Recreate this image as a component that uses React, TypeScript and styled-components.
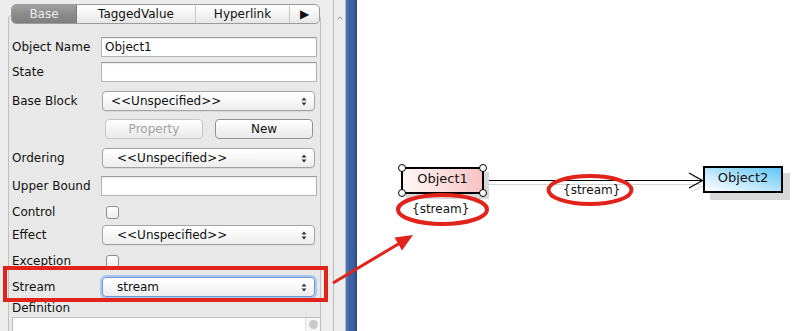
import styled, { createGlobalStyle, css } from "styled-components";

const GlobalStyle = createGlobalStyle`
  html, body {
    margin: 0;
    padding: 0;
    background: #fff;
  }
  body {
    font-family: "DejaVu Sans", "Liberation Sans", sans-serif;
    font-size: 12px;
    color: #111;
  }
  * {
    box-sizing: border-box;
  }
`;

const Window = styled.div`
  position: relative;
  display: flex;
  width: 796px;
  height: 331px;
  overflow: hidden;
`;

const LeftPane = styled.div`
  flex: none;
  width: 334px;
  padding-top: 4px;
  background: #ececec;
  border-right: 1px solid #bcbcbc;
  overflow: hidden;
`;

const TabBar = styled.div`
  position: relative;
  z-index: 1;
  display: flex;
  width: 309px;
  height: 20px;
  margin-left: 11px;
  border: 1px solid #9c9c9c;
  border-radius: 5px;
  overflow: hidden;
  background: linear-gradient(#ffffff, #f1f1f1 60%, #e6e6e6);
`;

const Tab = styled.div<{ $w: number; $active?: boolean; $last?: boolean }>`
  flex: none;
  width: ${(p) => p.$w}px;
  display: flex;
  align-items: center;
  justify-content: center;
  font-size: 12px;
  color: #111;
  border-right: ${(p) => (p.$last ? "none" : "1px solid #c9c9c9")};
  ${(p) =>
    p.$active &&
    css`
      background: linear-gradient(#a0a0a0, #8a8a8a 55%, #7f7f7f);
      color: #ececec;
      border-right-color: #7a7a7a;
    `}
`;

const Panel = styled.div`
  width: 313px;
  height: 330px;
  margin: -10px 0 0 8px;
  background: #e8e8e8;
  border: 1px solid #bfbfbf;
  border-radius: 5px;
  padding-left: 3px;
`;

const Row = styled.div<{ $mt: number; $h?: number }>`
  display: grid;
  grid-template-columns: 89px 1fr;
  align-items: center;
  height: ${(p) => p.$h ?? 20}px;
  margin-top: ${(p) => p.$mt}px;
`;

const Label = styled.span`
  font-size: 12px;
  color: #111;
  white-space: nowrap;
`;

const TextInput = styled.div`
  width: 216px;
  height: 20px;
  padding-left: 3px;
  display: flex;
  align-items: center;
  background: #fff;
  border: 1px solid #b3b3b3;
  border-top-color: #9a9a9a;
  box-shadow: inset 0 1px 1px rgba(0, 0, 0, 0.08);
  font-size: 12px;
`;

const SelectBox = styled.div<{ $pad: number; $focus?: boolean }>`
  position: relative;
  width: 213px;
  height: 20px;
  margin-left: 1px;
  padding-left: ${(p) => p.$pad}px;
  display: flex;
  align-items: center;
  background: linear-gradient(#ffffff, #f7f7f7 50%, #ececec);
  border: 1px solid #a4a4a4;
  border-radius: 4px;
  box-shadow: 0 1px 0 rgba(0, 0, 0, 0.06);
  font-size: 12px;
  ${(p) =>
    p.$focus &&
    css`
      border-color: #6f9ad6;
      box-shadow: 0 0 0 2px #a9c8ef;
    `}
`;

const Arrows = styled.svg`
  position: absolute;
  right: 7px;
  top: 5px;
`;

const ButtonRow = styled.div`
  grid-column: 2;
  display: flex;
  gap: 12px;
  margin-left: 4px;
`;

const Button = styled.div<{ $disabled?: boolean }>`
  width: 98px;
  height: 20px;
  display: flex;
  align-items: center;
  justify-content: center;
  border-radius: 4px;
  font-size: 12px;
  background: linear-gradient(#ffffff, #f4f4f4 50%, #e9e9e9);
  border: 1px solid ${(p) => (p.$disabled ? "#c6c6c6" : "#929292")};
  color: ${(p) => (p.$disabled ? "#a2a2a2" : "#111")};
`;

const Check = styled.div`
  width: 13px;
  height: 13px;
  margin-left: 5px;
  border: 1px solid #8e8e8e;
  border-radius: 3px;
  background: linear-gradient(#ffffff, #ededed);
`;

const TextArea = styled.div`
  position: relative;
  width: 309px;
  height: 30px;
  background: #fff;
  border: 1px solid #bdbdbd;
`;

const AreaScroll = styled.div`
  position: absolute;
  right: 0;
  top: 0;
  width: 15px;
  height: 100%;
  background: #f6f6f6;
  border-left: 1px solid #e0e0e0;
  display: flex;
  justify-content: center;
  padding-top: 2px;
  &::after {
    content: "";
    width: 9px;
    height: 9px;
    border-radius: 50%;
    background: #c9c9c9;
  }
`;

const ScrollStrip = styled.div`
  flex: none;
  width: 12px;
  padding: 9px 0 0 3px;
  background: #ececec;
  border-right: 1px solid #b8b8b8;
`;

const BlueBar = styled.div`
  flex: none;
  width: 11px;
  background: linear-gradient(to right, #5677b3, #3f64a6 30%, #3a5e9f 70%, #27457f);
`;

const Canvas = styled.div`
  position: relative;
  flex: 1;
  background: #fff;
`;

const Wires = styled.svg`
  position: absolute;
  left: 0;
  top: 0;
`;

const Node = styled.div<{ $x: number; $y: number; $w: number; $fill: string; $shadow: number }>`
  position: absolute;
  left: ${(p) => p.$x}px;
  top: ${(p) => p.$y}px;
  width: ${(p) => p.$w}px;
  height: 27px;
  padding-bottom: 4px;
  display: flex;
  align-items: center;
  justify-content: center;
  border: 2px solid #000;
  background: ${(p) => p.$fill};
  box-shadow: ${(p) => p.$shadow}px ${(p) => p.$shadow}px 0 #d8d8d8;
  font-size: 13px;
  color: #111;
`;

const Handle = styled.div<{ $right?: boolean; $bottom?: boolean }>`
  position: absolute;
  width: 8px;
  height: 8px;
  border: 1px solid #000;
  border-radius: 50%;
  background: #fff;
  left: ${(p) => (p.$right ? "auto" : "-5px")};
  right: ${(p) => (p.$right ? "-5px" : "auto")};
  top: ${(p) => (p.$bottom ? "auto" : "-5px")};
  bottom: ${(p) => (p.$bottom ? "-5px" : "auto")};
`;

const Tag = styled.div<{ $x: number; $y: number }>`
  position: absolute;
  left: ${(p) => p.$x}px;
  top: ${(p) => p.$y}px;
  font-size: 12px;
  color: #111;
  line-height: 16px;
`;

const Overlay = styled.svg`
  position: absolute;
  left: 0;
  top: 0;
  pointer-events: none;
`;

const UpDown = () => (
  <Arrows width="6" height="9" viewBox="0 0 6 9">
    <path d="M0.5 3.5 L3 0.5 L5.5 3.5 Z" fill="#333" />
    <path d="M0.5 5.5 L3 8.5 L5.5 5.5 Z" fill="#333" />
  </Arrows>
);

const Select = ({ value, pad = 14, focus }: { value: string; pad?: number; focus?: boolean }) => (
  <SelectBox $pad={pad} $focus={focus}>
    {value}
    <UpDown />
  </SelectBox>
);

const RED = "#e2231c";

export default function App() {
  return (
    <Window>
      <GlobalStyle />
      <LeftPane>
        <TabBar>
          <Tab $w={65} $active>
            Base
          </Tab>
          <Tab $w={119}>TaggedValue</Tab>
          <Tab $w={94}>Hyperlink</Tab>
          <Tab $w={29} $last>
            ▶
          </Tab>
        </TabBar>
        <Panel>
          <Row $mt={22}>
            <Label>Object Name</Label>
            <TextInput>Object1</TextInput>
          </Row>
          <Row $mt={5}>
            <Label>State</Label>
            <TextInput />
          </Row>
          <Row $mt={9}>
            <Label>Base Block</Label>
            <Select value="<<Unspecified>>" pad={8} />
          </Row>
          <Row $mt={8}>
            <ButtonRow>
              <Button $disabled>Property</Button>
              <Button>New</Button>
            </ButtonRow>
          </Row>
          <Row $mt={9}>
            <Label>Ordering</Label>
            <Select value="<<Unspecified>>" />
          </Row>
          <Row $mt={8}>
            <Label>Upper Bound</Label>
            <TextInput />
          </Row>
          <Row $mt={6}>
            <Label>Control</Label>
            <Check />
          </Row>
          <Row $mt={3}>
            <Label>Effect</Label>
            <Select value="<<Unspecified>>" />
          </Row>
          <Row $mt={6}>
            <Label>Exception</Label>
            <Check />
          </Row>
          <Row $mt={5} $h={21}>
            <Label>Stream</Label>
            <Select value="stream" focus />
          </Row>
          <Row $mt={2} $h={18}>
            <Label>Definition</Label>
          </Row>
          <TextArea>
            <AreaScroll />
          </TextArea>
        </Panel>
      </LeftPane>
      <ScrollStrip>
        <svg width="6" height="4" viewBox="0 0 6 4">
          <path d="M0.5 3.5 L3 0.8 L5.5 3.5" fill="none" stroke="#9a9a9a" strokeWidth="1" />
        </svg>
      </ScrollStrip>
      <BlueBar />
      <Canvas>
        <Wires width="439" height="331">
          <line x1="131" y1="184.5" x2="343" y2="184.5" stroke="#d4d4d4" strokeWidth="1" />
          <polyline points="335,176.5 349,184.5 335,191.5" fill="none" stroke="#d4d4d4" strokeWidth="1" />
          <line x1="127" y1="180.5" x2="345" y2="180.5" stroke="#000" strokeWidth="1" />
          <polyline points="332,173 345.5,180.5 332,188" fill="none" stroke="#000" strokeWidth="1.2" />
        </Wires>
        <Node $x={44} $y={167} $w={83} $shadow={5} $fill="linear-gradient(to right, #fff6f6, #fbd9d9 60%, #f7c2c2)">
          Object1
          <Handle />
          <Handle $right />
          <Handle $bottom />
          <Handle $right $bottom />
        </Node>
        <Tag $x={55} $y={201}>
          {"{stream}"}
        </Tag>
        <Tag $x={206} $y={182}>
          {"{stream}"}
        </Tag>
        <Node
          $x={346}
          $y={166}
          $w={80}
          $shadow={7}
          $fill="linear-gradient(to right top, #ffffff 0%, #c4e9fc 40%, #5ec5f6 100%)"
        >
          Object2
        </Node>
      </Canvas>
      <Overlay width="796" height="331" viewBox="0 0 796 331">
        <rect x="5" y="268" width="321" height="32" fill="none" stroke={RED} strokeWidth="4" />
        <ellipse cx="442.5" cy="209.5" rx="44.5" ry="14.5" fill="none" stroke={RED} strokeWidth="4" />
        <ellipse cx="590" cy="190" rx="41.5" ry="14" fill="none" stroke={RED} strokeWidth="4" />
        <line x1="333" y1="283" x2="400" y2="243" stroke={RED} strokeWidth="3" />
        <polygon points="413,235 394.5,237.5 402,250.5" fill={RED} />
      </Overlay>
    </Window>
  );
}
